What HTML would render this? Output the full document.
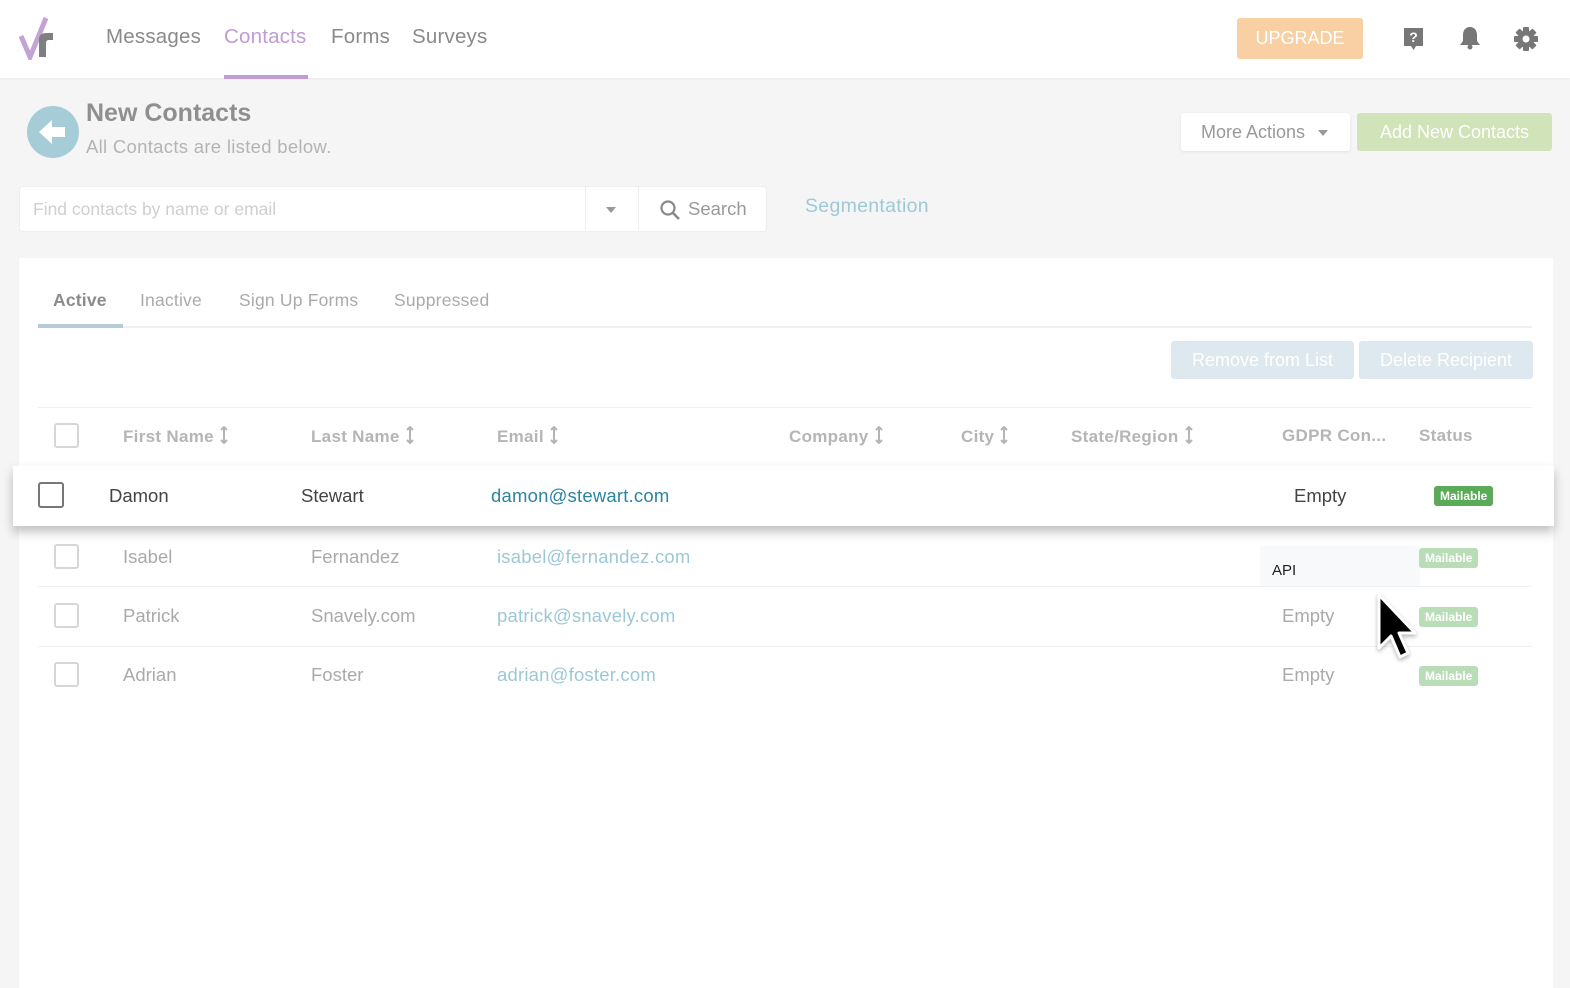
<!DOCTYPE html>
<html><head><meta charset="utf-8"><style>
*{margin:0;padding:0;box-sizing:border-box}
body{width:1570px;height:981px;overflow:hidden;background:#f5f5f5;font-family:"Liberation Sans",sans-serif;position:relative;color:#888}
.a{position:absolute;white-space:nowrap}
.hdr{position:absolute;left:0;top:0;width:1570px;height:78px;background:#fff;box-shadow:0 1px 3px rgba(0,0,0,.05)}
.nav{font-size:20.5px;top:25px;color:#8a8a8a;letter-spacing:.2px}
.card{position:absolute;left:19px;top:258px;width:1534px;height:730px;background:#fff}
.th{font-size:17px;font-weight:bold;color:#b5b5b5;top:426px;letter-spacing:.3px}
.cb{position:absolute;width:25px;height:25px;border:2px solid #d6d6d6;border-radius:3px;background:#fff}
.td{font-size:18.5px;color:#aaa}
.em{font-size:18.5px;color:#9cc8d6;letter-spacing:.2px}
.ml{position:absolute;font-size:12px;font-weight:bold;color:#fff;background:#b9deb7;border-radius:3px;padding:3px 6px}
.line{position:absolute;left:38px;width:1494px;height:1px;background:#f0f0f0}
.tab{font-size:17.5px;top:290px;color:#aaa;letter-spacing:.2px}
svg.s{display:inline-block;vertical-align:-2px;margin-left:6px}
</style></head><body>
<div class="hdr"></div>
<svg class="a" style="left:18px;top:16px" width="40" height="44" viewBox="0 0 40 44"><path d="M3 20 L12 41 L28 2" stroke="#c2a3d3" stroke-width="5" fill="none"/><path d="M21 41 V23 Q21 17 29 17 H35 V24 H31 Q28 24 28 27 V41 Z" fill="#7f7f7f"/></svg>
<div class="a nav" style="left:106px">Messages</div>
<div class="a nav" style="left:224px;color:#c09bd4">Contacts</div>
<div class="a nav" style="left:331px">Forms</div>
<div class="a nav" style="left:412px">Surveys</div>
<div class="a" style="left:224px;top:75px;width:84px;height:4px;background:#c09bd4"></div>
<div class="a" style="left:1237px;top:18px;width:126px;height:41px;background:#f9d0a3;border-radius:3px;color:#fff;font-size:18px;text-align:center;line-height:41px">UPGRADE</div>
<svg class="a" style="left:1403px;top:27px" width="21" height="24" viewBox="0 0 21 24"><path d="M1 1 H20 V19 H13 L10.5 23 L8 19 H1 Z" fill="#777"/><text x="10.5" y="15" font-size="14" font-weight="bold" fill="#fff" text-anchor="middle" font-family="Liberation Sans">?</text></svg>
<svg class="a" style="left:1459px;top:26px" width="22" height="24" viewBox="0 0 22 24"><path d="M11 1 C6 1 4 5 4 9 V15 L1 19 H21 L18 15 V9 C18 5 16 1 11 1 Z" fill="#777"/><circle cx="11" cy="21" r="2.5" fill="#777"/></svg>
<svg class="a" style="left:1513px;top:26px" width="26" height="26" viewBox="0 0 26 26"><g fill="#777" transform="translate(13 13)"><rect x="-3" y="-12" width="6" height="24" rx="1"/><rect x="-3" y="-12" width="6" height="24" rx="1" transform="rotate(45)"/><rect x="-3" y="-12" width="6" height="24" rx="1" transform="rotate(90)"/><rect x="-3" y="-12" width="6" height="24" rx="1" transform="rotate(135)"/><circle r="8.5"/><circle r="3.5" fill="#fff"/></g></svg>

<div class="a" style="left:27px;top:106px;width:52px;height:52px;border-radius:50%;background:#a6ccd8"></div>
<svg class="a" style="left:38px;top:118px" width="30" height="28" viewBox="0 0 30 28"><path d="M1 14 L14 2 V9 H27 V19 H14 V26 Z" fill="#fff"/></svg>
<div class="a" style="left:86px;top:99px;font-size:25px;font-weight:bold;color:#8f8f8f">New Contacts</div>
<div class="a" style="left:86px;top:136px;font-size:18.5px;color:#b4b4b4;letter-spacing:.3px">All Contacts are listed below.</div>
<div class="a" style="left:1181px;top:113px;width:169px;height:38px;background:#fff;border-radius:3px;box-shadow:0 1px 3px rgba(0,0,0,.08);font-size:18px;color:#999;line-height:38px;padding-left:20px">More Actions <span style="display:inline-block;border:5px solid transparent;border-top:6px solid #999;margin-left:8px;vertical-align:-3px"></span></div>
<div class="a" style="left:1357px;top:113px;width:195px;height:38px;background:#d1e3b8;border-radius:3px;font-size:18px;color:#fff;line-height:38px;text-align:center">Add New Contacts</div>

<div class="a" style="left:19px;top:186px;width:748px;height:46px;background:#fff;border:1px solid #eee;border-radius:4px"></div>
<div class="a" style="left:585px;top:187px;width:1px;height:44px;background:#eee"></div>
<div class="a" style="left:638px;top:187px;width:1px;height:44px;background:#eee"></div>
<div class="a" style="left:33px;top:199px;font-size:17.5px;color:#cfcfcf">Find contacts by name or email</div>
<div class="a" style="left:606px;top:207px;border:5px solid transparent;border-top:6px solid #999"></div>
<svg class="a" style="left:659px;top:199px" width="22" height="22" viewBox="0 0 22 22"><circle cx="9" cy="9" r="6.5" stroke="#888" stroke-width="2.2" fill="none"/><path d="M14 14 L20 20" stroke="#888" stroke-width="2.5"/></svg>
<div class="a" style="left:688px;top:198px;font-size:18.5px;color:#999">Search</div>
<div class="a" style="left:805px;top:195px;font-size:19.5px;color:#9dc9d7;letter-spacing:.3px">Segmentation</div>

<div class="card"></div>
<div class="a tab" style="left:53px;font-weight:bold;color:#8a8a8a">Active</div>
<div class="a tab" style="left:140px">Inactive</div>
<div class="a tab" style="left:239px">Sign Up Forms</div>
<div class="a tab" style="left:394px">Suppressed</div>
<div class="line" style="top:326px;height:2px"></div>
<div class="a" style="left:38px;top:324px;width:85px;height:4px;background:#b7cbd6"></div>
<div class="a" style="left:1171px;top:341px;width:183px;height:38px;background:#dde9ee;border-radius:3px;color:#fff;font-size:18px;line-height:38px;text-align:center">Remove from List</div>
<div class="a" style="left:1359px;top:341px;width:174px;height:38px;background:#dde9ee;border-radius:3px;color:#fff;font-size:18px;line-height:38px;text-align:center">Delete Recipient</div>
<div class="line" style="top:407px"></div>

<div class="cb" style="left:54px;top:423px"></div>
<div class="a th" style="left:123px">First Name<svg class="s" width="8" height="18" viewBox="0 0 8 18"><path d="M4 1 V17 M1 4 L4 1 L7 4 M1 14 L4 17 L7 14" stroke="#b5b5b5" stroke-width="2" fill="none"/></svg></div>
<div class="a th" style="left:311px">Last Name<svg class="s" width="8" height="18" viewBox="0 0 8 18"><path d="M4 1 V17 M1 4 L4 1 L7 4 M1 14 L4 17 L7 14" stroke="#b5b5b5" stroke-width="2" fill="none"/></svg></div>
<div class="a th" style="left:497px">Email<svg class="s" width="8" height="18" viewBox="0 0 8 18"><path d="M4 1 V17 M1 4 L4 1 L7 4 M1 14 L4 17 L7 14" stroke="#b5b5b5" stroke-width="2" fill="none"/></svg></div>
<div class="a th" style="left:789px">Company<svg class="s" width="8" height="18" viewBox="0 0 8 18"><path d="M4 1 V17 M1 4 L4 1 L7 4 M1 14 L4 17 L7 14" stroke="#b5b5b5" stroke-width="2" fill="none"/></svg></div>
<div class="a th" style="left:961px">City<svg class="s" width="8" height="18" viewBox="0 0 8 18"><path d="M4 1 V17 M1 4 L4 1 L7 4 M1 14 L4 17 L7 14" stroke="#b5b5b5" stroke-width="2" fill="none"/></svg></div>
<div class="a th" style="left:1071px">State/Region<svg class="s" width="8" height="18" viewBox="0 0 8 18"><path d="M4 1 V17 M1 4 L4 1 L7 4 M1 14 L4 17 L7 14" stroke="#b5b5b5" stroke-width="2" fill="none"/></svg></div>
<div class="a th" style="left:1282px">GDPR Con...</div>
<div class="a th" style="left:1419px">Status</div>

<div class="line" style="top:586px"></div>
<div class="line" style="top:646px"></div>
<div class="a" style="left:1260px;top:546px;width:160px;height:40px;background:#f8f9fb"></div>
<div class="a" style="left:1272px;top:562px;font-size:15px;color:#222">API</div>

<div class="cb" style="left:54px;top:544px"></div>
<div class="a td" style="left:123px;top:546px">Isabel</div>
<div class="a td" style="left:311px;top:546px">Fernandez</div>
<div class="a em" style="left:497px;top:546px">isabel@fernandez.com</div>
<div class="ml" style="left:1419px;top:548px">Mailable</div>

<div class="cb" style="left:54px;top:603px"></div>
<div class="a td" style="left:123px;top:605px">Patrick</div>
<div class="a td" style="left:311px;top:605px">Snavely.com</div>
<div class="a em" style="left:497px;top:605px">patrick@snavely.com</div>
<div class="a td" style="left:1282px;top:605px">Empty</div>
<div class="ml" style="left:1419px;top:607px">Mailable</div>

<div class="cb" style="left:54px;top:662px"></div>
<div class="a td" style="left:123px;top:664px">Adrian</div>
<div class="a td" style="left:311px;top:664px">Foster</div>
<div class="a em" style="left:497px;top:664px">adrian@foster.com</div>
<div class="a td" style="left:1282px;top:664px">Empty</div>
<div class="ml" style="left:1419px;top:666px">Mailable</div>

<div class="a" style="left:13px;top:466px;width:1541px;height:60px;background:#fff;box-shadow:0 6px 10px rgba(0,0,0,.25)"></div>
<div class="cb" style="left:38px;top:482px;border-color:#777;width:26px;height:26px"></div>
<div class="a" style="left:109px;top:485px;font-size:18.5px;color:#444">Damon</div>
<div class="a" style="left:301px;top:485px;font-size:18.5px;color:#444">Stewart</div>
<div class="a" style="left:491px;top:485px;font-size:18.5px;color:#2b84a0;letter-spacing:.2px">damon@stewart.com</div>
<div class="a" style="left:1294px;top:485px;font-size:18.5px;color:#444">Empty</div>
<div class="ml" style="left:1434px;top:486px;background:#5aaa58">Mailable</div>

<svg class="a" style="left:1374px;top:592px" width="46" height="72" viewBox="0 0 46 72"><path d="M5 3 V56 L17 44 L26 65 L34 61 L25 41 L41 41 Z" fill="#000" stroke="#fff" stroke-width="3" stroke-linejoin="round" style="filter:drop-shadow(0 2px 2px rgba(0,0,0,.3))"/></svg>
</body></html>
